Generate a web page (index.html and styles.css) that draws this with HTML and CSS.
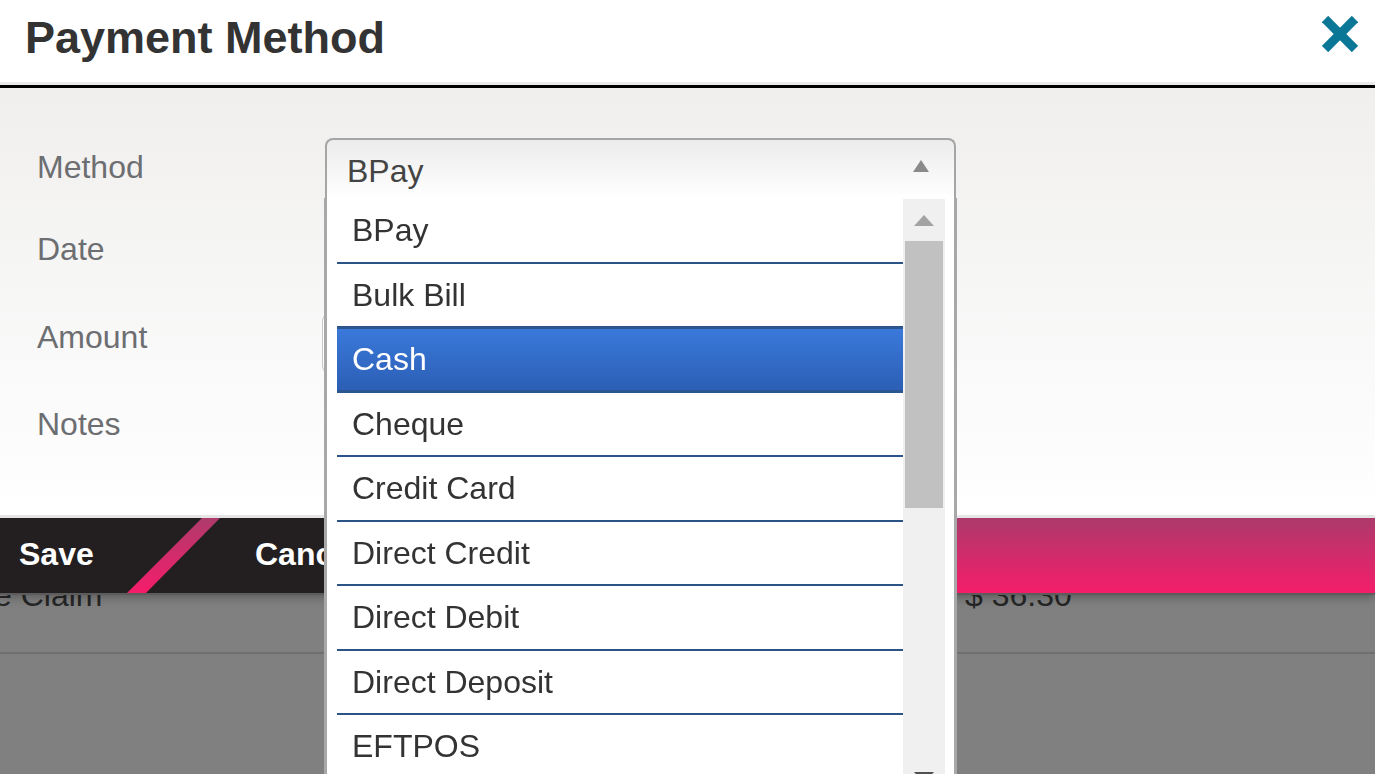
FILE: index.html
```html
<!DOCTYPE html>
<html lang="en">
<head>
    <meta charset="UTF-8">
    <meta name="viewport" content="width=device-width, initial-scale=1.0">
    <title>Payment Method</title>
    <link rel="stylesheet" href="styles.css">
</head>
<body>

<div class="page">
    <div class="page-row">
        <div class="cell-desc">e Claim</div>
        <div class="cell-amount">$ 36.30</div>
    </div>
</div>

<div class="modal">
    <div class="modal-header">
        <h1>Payment Method</h1>
        <button class="close" aria-label="Close">
            <svg width="36" height="36" viewBox="0 0 36 36">
                <line x1="3" y1="3" x2="33" y2="33" stroke="#0b7797" stroke-width="9"/>
                <line x1="33" y1="3" x2="3" y2="33" stroke="#0b7797" stroke-width="9"/>
            </svg>
        </button>
    </div>

    <div class="modal-body">
        <div class="form-row row-method">
            <label>Method</label>
            <div class="select">
                <div class="select-value">BPay</div>
                <span class="select-arrow"></span>

                <div class="select-list">
                    <ul class="options">
                        <li>BPay</li>
                        <li>Bulk Bill</li>
                        <li class="selected">Cash</li>
                        <li>Cheque</li>
                        <li>Credit Card</li>
                        <li>Direct Credit</li>
                        <li>Direct Debit</li>
                        <li>Direct Deposit</li>
                        <li>EFTPOS</li>
                        <li>Health Fund</li>
                    </ul>
                    <div class="scrollbar">
                        <span class="scroll-up"></span>
                        <span class="scroll-thumb"></span>
                        <span class="scroll-down"></span>
                    </div>
                </div>
            </div>
        </div>
        <div class="form-row row-date">
            <label>Date</label>
            <input type="text" class="field field-date">
        </div>
        <div class="form-row row-amount">
            <label>Amount</label>
            <input type="text" class="field">
        </div>
        <div class="form-row row-notes">
            <label>Notes</label>
        </div>
    </div>

    <div class="modal-footer">
        <button class="btn btn-save">Save</button>
        <span class="stripe"></span>
        <button class="btn btn-cancel">Cancel</button>
        <span class="footer-fill"></span>
    </div>
</div>

</body>
</html>
```

FILE: styles.css
```css
body {
    margin: 0;
    font-family: "Liberation Sans", Arial, sans-serif;
    background-color: #808080;
    overflow: hidden;
}

/* page behind the dialog */
.page {
    padding-top: 560px;
}
.page-row {
    display: flex;
    height: 73px;
    padding-top: 19px;
    border-bottom: 2px solid #6f6f6f;
    font-size: 32px;
    line-height: 32px;
    color: #262626;
}
.cell-desc {
    width: 971px;
    margin-left: -6px;
}

/* dialog */
.modal {
    position: fixed;
    top: 0;
    left: 0;
    right: 0;
    z-index: 10;
    box-shadow: 0 2px 0 #5c5c5c, 0 4px 10px rgba(0, 0, 0, 0.3);
}
.modal-header {
    height: 85px;
    background-color: #fff;
    border-bottom: 3px solid #000;
    box-shadow: inset 0 -3px 0 #ebebeb;
    display: flex;
    justify-content: space-between;
    align-items: flex-start;
    padding: 0 17px 0 25px;
    box-sizing: content-box;
}
.modal-header h1 {
    margin: 0;
    padding-top: 15px;
    font-size: 45px;
    line-height: 45px;
    font-weight: bold;
    color: #333;
}
.close {
    border: none;
    background: none;
    padding: 0;
    margin-top: 16px;
    width: 36px;
    height: 36px;
    cursor: pointer;
}
.close svg {
    display: block;
}

.modal-body {
    height: 377px;
    padding: 50px 0 0 37px;
    background: linear-gradient(#f0efee, #ffffff);
    border-bottom: 3px solid #e5e5e5;
}
.form-row {
    display: flex;
    align-items: flex-start;
}
.form-row label {
    width: 285px;
    padding-top: 13px;
    font-size: 32px;
    line-height: 32px;
    color: #6d6e71;
}
.row-method { height: 82px; }
.row-date { height: 88px; }
.row-amount { height: 87px; }
.row-notes { height: 85px; }

.field {
    margin-top: 5px;
    width: 600px;
    height: 57px;
    border: 1px solid #c8c8c8;
    border-radius: 8px;
    background-color: #fff;
    font-size: 28px;
}
.field-date {
    margin-left: 10px;
}

/* select + open list */
.select {
    position: relative;
    margin-left: 3px;
    width: 627px;
    height: 58px;
    border: 2px solid #a5a5a5;
    border-bottom: none;
    border-radius: 8px 8px 0 0;
    background: linear-gradient(#ececec, #ffffff);
    z-index: 5;
}
.select-value {
    padding: 15px 0 0 20px;
    font-size: 32px;
    line-height: 32px;
    color: #444;
}
.select-arrow {
    position: absolute;
    top: 20px;
    right: 25px;
    width: 0;
    height: 0;
    border-left: 8px solid transparent;
    border-right: 8px solid transparent;
    border-bottom: 12px solid #8a8a8a;
}
.select-list {
    position: absolute;
    top: 100%;
    left: -3px;
    right: -3px;
    display: flex;
    padding: 1px 0 0 10px;
    background-color: #fff;
    border-left: 3px solid #a8a8a8;
    border-right: 3px solid #a8a8a8;
}
.options {
    list-style-type: none;
    margin: 0;
    padding: 0;
    width: 566px;
    height: 600px;
    overflow: hidden;
}
.options li {
    height: 62.5px;
    line-height: 62.5px;
    padding-left: 15px;
    font-size: 32px;
    color: #333;
    border-bottom: 2px solid #2a5486;
}
.options li.selected {
    color: #fff;
    background: linear-gradient(#3a79db, #2c5fb5);
    border-bottom: 3px solid #2a5790;
    box-shadow: 0 -1px 0 #2a5790, inset 0 1px 0 #2a5790;
    height: 61.5px;
}
.scrollbar {
    position: relative;
    width: 42px;
    height: 600px;
    background-color: #f0f0f0;
}
.scroll-up {
    position: absolute;
    top: 16px;
    left: 11px;
    border-left: 10.5px solid transparent;
    border-right: 10.5px solid transparent;
    border-bottom: 11px solid #a3a3a3;
}
.scroll-thumb {
    position: absolute;
    top: 42px;
    left: 2px;
    width: 38px;
    height: 267px;
    background-color: #c1c1c1;
}
.scroll-down {
    position: absolute;
    bottom: 16px;
    left: 11px;
    border-left: 10.5px solid transparent;
    border-right: 10.5px solid transparent;
    border-top: 11px solid #505050;
}

/* footer bar */
.modal-footer {
    display: flex;
    align-items: center;
    height: 75px;
    background-color: #231f20;
}
.btn {
    border: none;
    background: none;
    padding: 0;
    margin-bottom: 3px;
    font-family: inherit;
    font-size: 32px;
    line-height: 32px;
    font-weight: bold;
    color: #fff;
    cursor: pointer;
}
.btn-save {
    width: 108px;
    margin-left: 19px;
    text-align: left;
}
.stripe {
    align-self: stretch;
    width: 93px;
    background: linear-gradient(#ae3b6c, #f61c6a);
    clip-path: polygon(75px 0, 93px 0, 19px 100%, 0 100%);
}
.btn-cancel {
    margin-left: 35px;
}
.footer-fill {
    align-self: stretch;
    margin-left: auto;
    width: 560px;
    background: linear-gradient(#ac3a6b, #f51d6a);
}
```
